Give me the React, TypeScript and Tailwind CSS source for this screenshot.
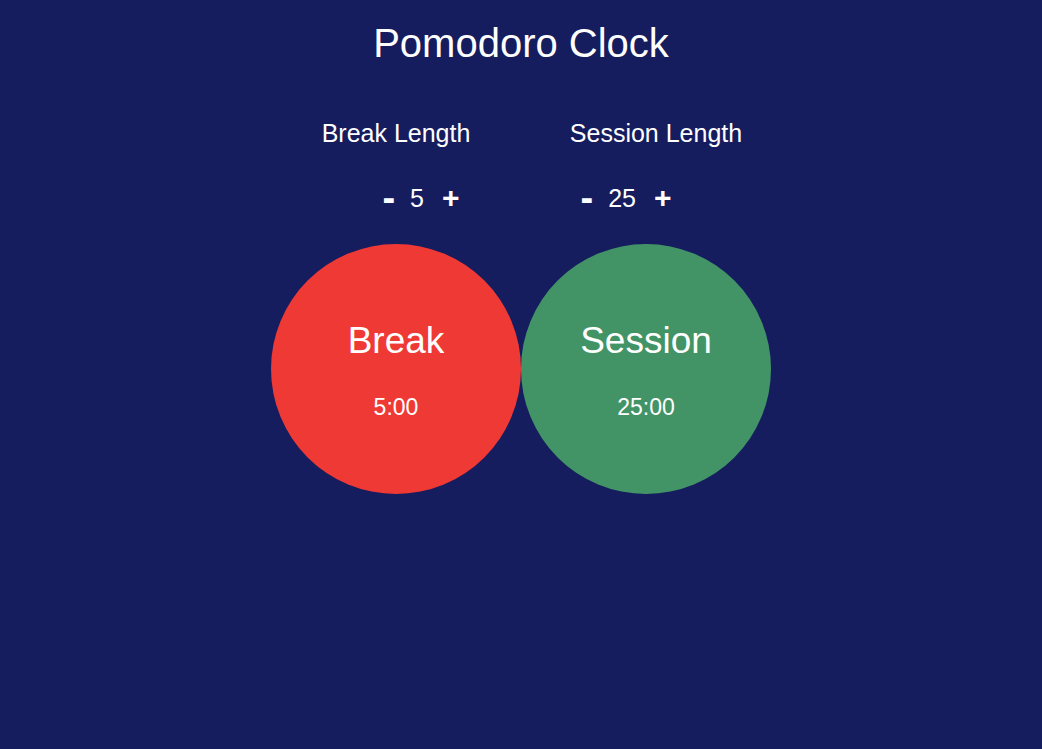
import { useState } from "react";

const font = { fontFamily: '"Liberation Sans", Arial, sans-serif' };

export default function App() {
  const [breakLen, setBreakLen] = useState(5);
  const [sessionLen, setSessionLen] = useState(25);

  return (
    <div
      className="min-h-screen w-full bg-[#161d5e] text-white"
      style={font}
    >
      {/* TITLE */}
      <h1 className="pt-[19px] text-center text-[40px] leading-[48px]">
        Pomodoro Clock
      </h1>

      <div className="mx-auto w-[500px]">
        {/* LABELS */}
        <div className="mt-[50px] flex">
          <div className="w-[250px] text-center text-[25px] leading-[32px]">
            Break Length
          </div>
          <div className="w-[250px] pl-[20px] text-center text-[25px] leading-[32px]">
            Session Length
          </div>
        </div>

        {/* CONTROLS */}
        <div className="mt-[33px] flex">
          <div className="flex w-[250px] items-center justify-center pl-[50px]">
            <button
              onClick={() => setBreakLen((v) => Math.max(1, v - 1))}
              className="text-[38px] font-bold leading-[32px]"
            >
              -
            </button>
            <span className="ml-[15px] mr-[18px] text-[25px] leading-[32px]">{breakLen}</span>
            <button
              onClick={() => setBreakLen((v) => v + 1)}
              className="text-[30px] font-bold leading-[32px]"
            >
              +
            </button>
          </div>
          <div className="flex w-[250px] items-center justify-center pr-[40px]">
            <button
              onClick={() => setSessionLen((v) => Math.max(1, v - 1))}
              className="text-[38px] font-bold leading-[32px]"
            >
              -
            </button>
            <span className="ml-[15px] mr-[18px] text-[25px] leading-[32px]">{sessionLen}</span>
            <button
              onClick={() => setSessionLen((v) => v + 1)}
              className="text-[30px] font-bold leading-[32px]"
            >
              +
            </button>
          </div>
        </div>

        {/* CIRCLES */}
        <div className="mt-[30px] flex">
          <div className="flex h-[250px] w-[250px] flex-col items-center rounded-full bg-[#ef3935] pt-[76px]">
            <div className="text-[37px] leading-[42px]">Break</div>
            <div className="mt-[32px] text-[23px] leading-[26px]">{breakLen}:00</div>
          </div>
          <div className="flex h-[250px] w-[250px] flex-col items-center rounded-full bg-[#429466] pt-[76px]">
            <div className="text-[37px] leading-[42px]">Session</div>
            <div className="mt-[32px] text-[23px] leading-[26px]">{sessionLen}:00</div>
          </div>
        </div>
      </div>
    </div>
  );
}
